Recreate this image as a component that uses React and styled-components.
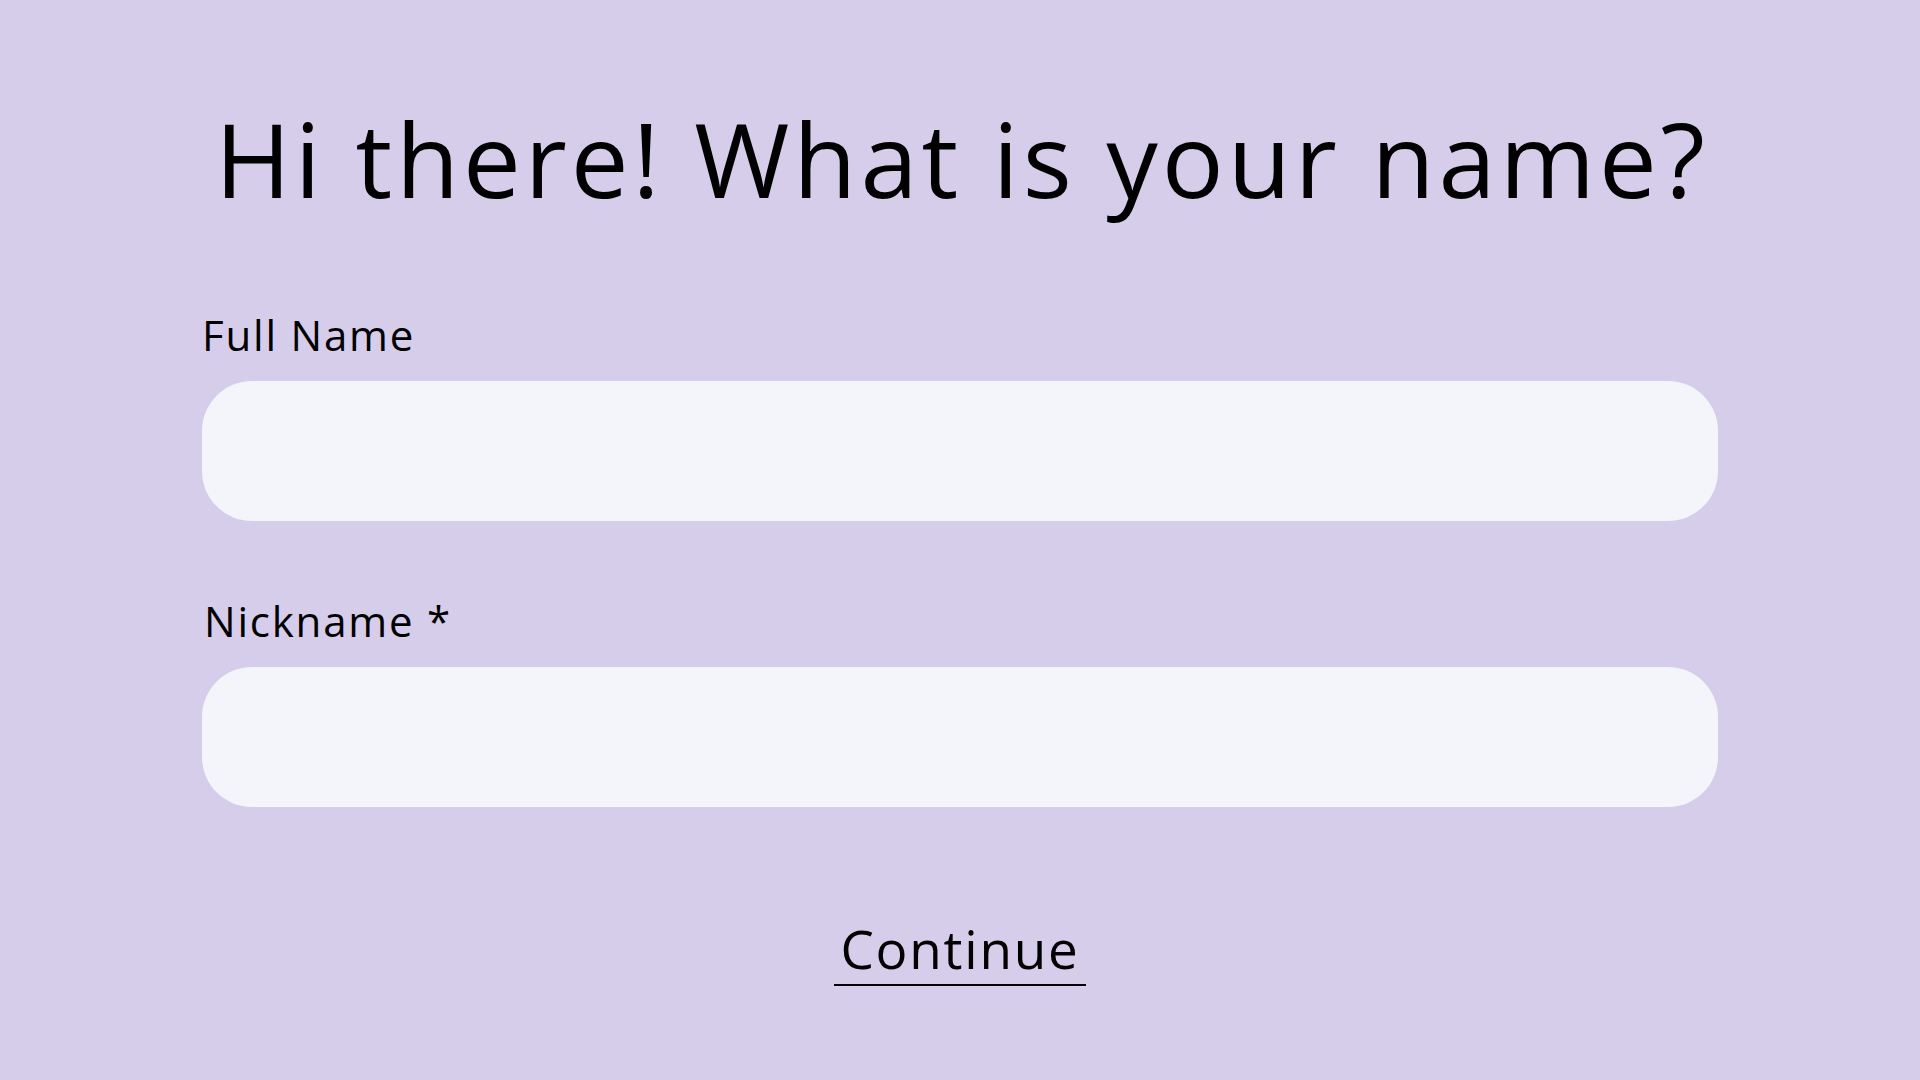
import React from "react";
import styled, { createGlobalStyle } from "styled-components";

const Global = createGlobalStyle`
  html, body { margin: 0; padding: 0; }
  body {
    background: #d6cdeb;
    font-family: "Open Sans", "Noto Sans", sans-serif;
    color: #000;
  }
`;

const Page = styled.main`
  min-height: 1080px;
  box-sizing: border-box;
  display: flex;
  flex-direction: column;
  align-items: center;
  padding-top: 88px;
`;

const Title = styled.h1`
  margin: 0;
  font-size: 103px;
  font-weight: 400;
  line-height: 140px;
  letter-spacing: 3.9px;
  text-align: center;
  padding-left: 4px;
`;

const Form = styled.form`
  width: 1516px;
  display: flex;
  flex-direction: column;
  margin-top: 82px;
`;

const Field = styled.div`
  display: flex;
  flex-direction: column;
  gap: 21px;
  & + & { margin-top: 75px; }
`;

const Label = styled.label`
  font-size: 42px;
  line-height: 50px;
  letter-spacing: 1.8px;
  padding-left: ${(p) => p.$indent || 0}px;
`;

const Input = styled.input`
  height: 140px;
  border: none;
  border-radius: 50px;
  background: #f4f5fa;
  outline: none;
  padding: 0 40px;
  font: inherit;
  font-size: 40px;
`;

const Actions = styled.div`
  display: flex;
  justify-content: center;
  margin-top: 110px;
`;

const ContinueButton = styled.button`
  background: none;
  border: none;
  border-bottom: 2px solid #000;
  padding: 0 6px 3px;
  font-family: inherit;
  font-size: 53px;
  line-height: 64px;
  letter-spacing: 1.8px;
  color: #000;
  cursor: pointer;
`;

export default function App() {
  return (
    <>
      <Global />
      <Page>
        <Title>Hi there! What is your name?</Title>
        <Form onSubmit={(e) => e.preventDefault()}>
          <Field>
            <Label htmlFor="fullname">Full Name</Label>
            <Input id="fullname" type="text" />
          </Field>
          <Field>
            <Label htmlFor="nickname" $indent={2}>Nickname *</Label>
            <Input id="nickname" type="text" />
          </Field>
          <Actions>
            <ContinueButton type="submit">Continue</ContinueButton>
          </Actions>
        </Form>
      </Page>
    </>
  );
}
